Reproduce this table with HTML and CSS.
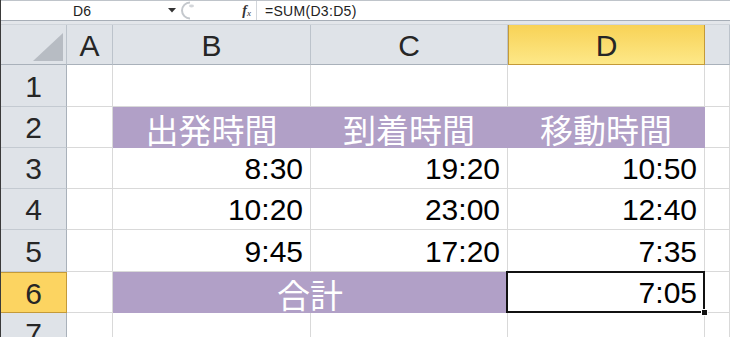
FILE: index.html
```html
<!DOCTYPE html>
<html lang="ja">
<head>
<meta charset="utf-8">
<title>移動時間</title>
<link rel="stylesheet" href="styles.css">
</head>
<body>
<div class="app">
  <div class="formula-bar">
    <div class="name-box">
      <span class="name">D6</span>
      <svg class="caret" width="8" height="5" viewBox="0 0 8 5"><path d="M0 0h8L4 4.5z" fill="#333"/></svg>
    </div>
    <div class="grip">
      <svg width="16" height="19" viewBox="0 0 16 19">
        <path d="M9 1.5 A8 8 0 0 0 9 17.5" fill="none" stroke="#c4c8cd" stroke-width="2"/>
        <ellipse cx="10.5" cy="5" rx="2.5" ry="1.4" fill="#d3d6da"/>
      </svg>
    </div>
    <div class="fx-btn"><span class="fx-f">f</span><span class="fx-x">x</span></div>
    <div class="formula">=SUM(D3:D5)</div>
  </div>
  <div class="band"></div>

  <div class="sheet">
    <!-- column headers -->
    <div class="corner"><span class="corner-tri"></span></div>
    <div class="col-head">A</div>
    <div class="col-head">B</div>
    <div class="col-head">C</div>
    <div class="col-head col-head--active">D</div>
    <div class="col-head col-head--last"></div>

    <!-- row 1 -->
    <div class="row-head">1</div>
    <div class="cell"></div>
    <div class="cell"></div>
    <div class="cell"></div>
    <div class="cell"></div>
    <div class="cell"></div>

    <!-- row 2 -->
    <div class="row-head">2</div>
    <div class="cell"></div>
    <div class="cell cell--title">出発時間</div>
    <div class="cell cell--title">到着時間</div>
    <div class="cell cell--title">移動時間</div>
    <div class="cell"></div>

    <!-- row 3 -->
    <div class="row-head">3</div>
    <div class="cell"></div>
    <div class="cell cell--num">8:30</div>
    <div class="cell cell--num">19:20</div>
    <div class="cell cell--num">10:50</div>
    <div class="cell"></div>

    <!-- row 4 -->
    <div class="row-head">4</div>
    <div class="cell"></div>
    <div class="cell cell--num">10:20</div>
    <div class="cell cell--num">23:00</div>
    <div class="cell cell--num">12:40</div>
    <div class="cell"></div>

    <!-- row 5 -->
    <div class="row-head">5</div>
    <div class="cell"></div>
    <div class="cell cell--num">9:45</div>
    <div class="cell cell--num">17:20</div>
    <div class="cell cell--num">7:35</div>
    <div class="cell"></div>

    <!-- row 6 -->
    <div class="row-head row-head--active">6</div>
    <div class="cell"></div>
    <div class="cell cell--title cell--merged">合計</div>
    <div class="cell cell--num cell--selected">7:05</div>
    <div class="cell"></div>

    <!-- row 7 -->
    <div class="row-head">7</div>
    <div class="cell"></div>
    <div class="cell"></div>
    <div class="cell"></div>
    <div class="cell"></div>
    <div class="cell"></div>
  </div>
</div>
</body>
</html>
```

FILE: styles.css
```css
html, body {
  margin: 0;
  padding: 0;
  background: #ffffff;
  overflow: hidden;
}

.app {
  width: 730px;
  height: 337px;
  overflow: hidden;
  border-left: 1px solid #3a3a3a;
  box-sizing: border-box;
  font-family: "Liberation Sans", Arial, sans-serif;
  color: #1a1a1a;
}

/* ---------- formula bar ---------- */
.formula-bar {
  display: flex;
  height: 19px;
  border-top: 1px solid #bfc4ca;
  border-bottom: 1px solid #a7aeb7;
  background: #ffffff;
  font-size: 14px;
}

.name-box {
  width: 180px;
  display: flex;
  align-items: center;
}

.name {
  width: 160px;
  text-align: center;
  font-size: 14px;
  color: #222;
  padding-left: 1px;
}

.caret {
  margin-left: 6px;
}

.grip {
  width: 18px;
  display: flex;
  align-items: center;
}

.fx-btn {
  width: 58px;
  display: flex;
  align-items: center;
  justify-content: flex-end;
  padding-right: 5px;
  box-sizing: border-box;
  border-right: 1px solid #d2d6db;
  font-family: "Liberation Serif", serif;
  color: #333;
}

.fx-f {
  font-style: italic;
  font-weight: bold;
  font-size: 14px;
}

.fx-x {
  font-style: italic;
  font-size: 9px;
  margin-top: 4px;
}

.formula {
  flex: 1;
  display: flex;
  align-items: center;
  padding-left: 8px;
  font-size: 14px;
  letter-spacing: 0.3px;
  color: #222;
}

.band {
  height: 3px;
  background: #e3e6ea;
  border-bottom: 1px solid #cfd4da;
}

/* ---------- grid ---------- */
.sheet {
  display: grid;
  grid-template-columns: 66px 46px 198px 197px 197px 1fr;
  grid-template-rows: 40px 42px 41px 41px 41px 42px 41px 41px;
}

.sheet > div {
  box-sizing: border-box;
  border-right: 1px solid #d9d9d9;
  border-bottom: 1px solid #d9d9d9;
}

.corner,
.col-head,
.row-head {
  background: #dfe3e8;
  color: #262626;
  font-size: 30px;
  display: flex;
  align-items: center;
  justify-content: center;
}

.sheet > .corner,
.sheet > .col-head {
  border-right-color: #bcc3cb;
  border-bottom-color: #a9b1ba;
}

.sheet > .row-head {
  border-right-color: #a9b1ba;
  border-bottom-color: #c4cad1;
  padding-top: 2px;
}

.corner {
  position: relative;
}

.corner-tri {
  position: absolute;
  right: 3px;
  bottom: 3px;
  width: 0;
  height: 0;
  border-left: 30px solid transparent;
  border-bottom: 28px solid #b7bcc3;
}

.col-head {
  padding-top: 3px;
}

.sheet > .col-head--active {
  background: linear-gradient(#f8d256, #fde888);
  border-left: 1px solid #c49a38;
  border-right: 1px solid #c49a38;
  border-bottom-color: #c49a38;
}

.sheet > .row-head--active {
  background: #fcd461;
  border-right-color: #c49a38;
  border-bottom-color: #c49a38;
  border-top: 1px solid #c49a38;
}

.cell {
  background: #ffffff;
}

.cell--num {
  display: flex;
  align-items: center;
  justify-content: flex-end;
  padding: 2px 7px 0 0;
  font-size: 30px;
  line-height: 1;
  color: #000;
}

.sheet > .cell--title {
  background: #b1a0c7;
  border-color: #b1a0c7;
  color: #ffffff;
  font-family: "Noto Sans CJK JP", "Noto Sans", sans-serif;
  font-size: 33px;
  line-height: 1;
  display: flex;
  align-items: center;
  justify-content: center;
  padding-top: 4px;
}

.cell--merged {
  grid-column: span 2;
}

.cell--selected {
  position: relative;
}

/* active-cell outline and fill handle sit over the grid lines */
.cell--selected::before {
  content: "";
  position: absolute;
  left: -2px;
  top: -1px;
  right: -1px;
  bottom: -1px;
  border: 2px solid #111;
}

.cell--selected::after {
  content: "";
  position: absolute;
  right: -4px;
  bottom: -4px;
  width: 5px;
  height: 5px;
  background: #111;
  border: 1px solid #fff;
}
```
